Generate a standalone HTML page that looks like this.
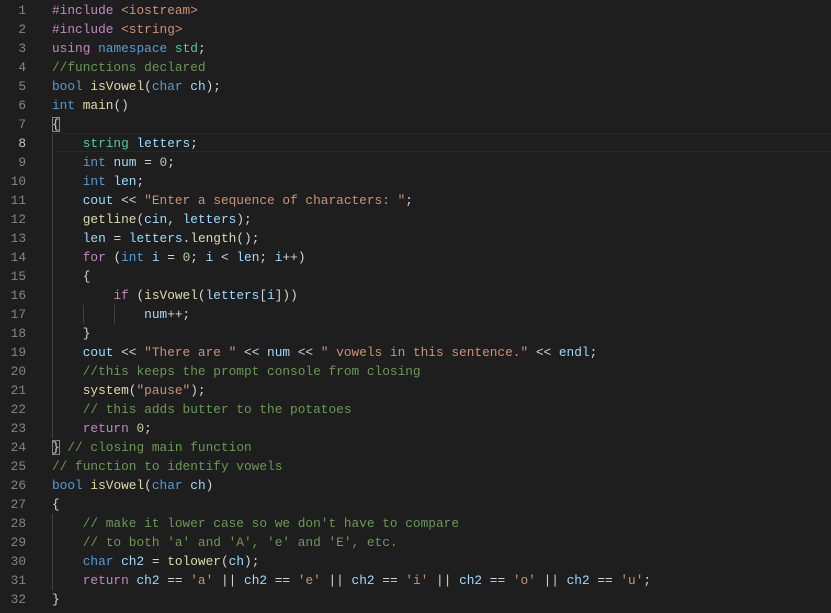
<!DOCTYPE html>
<html><head><meta charset="utf-8"><style>
body{margin:0;width:831px;height:613px;background:#1e1e1e;overflow:hidden;font-family:"Liberation Mono",monospace;font-size:12.8px;}
.l{position:absolute;left:0;height:19px;line-height:19px;white-space:pre;width:831px}
.n{position:absolute;right:805px;color:#858585;text-align:right}
.c{position:absolute;left:52px;color:#d4d4d4}
.k{color:#569cd6}.p{color:#c586c0}.s{color:#ce9178}.m{color:#6a9955}.f{color:#dcdcaa}.v{color:#9cdcfe}.t{color:#4ec9b0}.u{color:#b5cea8}
.g{position:absolute;width:1px;background:#404040}
.b{outline:1px solid #888;outline-offset:-1px}
.cur{position:absolute;left:52px;right:0;top:133px;height:17px;border-top:1px solid #282828;border-bottom:1px solid #282828}
</style></head><body>
<div class="cur"></div>
<div class="g" style="left:52px;top:134px;height:304px"></div>
<div class="g" style="left:83px;top:305px;height:19px"></div>
<div class="g" style="left:114px;top:305px;height:19px"></div>
<div class="g" style="left:52px;top:514px;height:76px"></div>
<div class="l" style="top:1px"><span class="n">1</span><span class="c"><span class="p">#include</span> <span class="s">&lt;iostream&gt;</span></span></div>
<div class="l" style="top:20px"><span class="n">2</span><span class="c"><span class="p">#include</span> <span class="s">&lt;string&gt;</span></span></div>
<div class="l" style="top:39px"><span class="n">3</span><span class="c"><span class="p">using</span> <span class="k">namespace</span> <span class="t">std</span>;</span></div>
<div class="l" style="top:58px"><span class="n">4</span><span class="c"><span class="m">//functions declared</span></span></div>
<div class="l" style="top:77px"><span class="n">5</span><span class="c"><span class="k">bool</span> <span class="f">isVowel</span>(<span class="k">char</span> <span class="v">ch</span>);</span></div>
<div class="l" style="top:96px"><span class="n">6</span><span class="c"><span class="k">int</span> <span class="f">main</span>()</span></div>
<div class="l" style="top:115px"><span class="n">7</span><span class="c"><span class="b">{</span></span></div>
<div class="l" style="top:134px"><span class="n" style="color:#c6c6c6">8</span><span class="c">    <span class="t">string</span> <span class="v">letters</span>;</span></div>
<div class="l" style="top:153px"><span class="n">9</span><span class="c">    <span class="k">int</span> <span class="v">num</span> = <span class="u">0</span>;</span></div>
<div class="l" style="top:172px"><span class="n">10</span><span class="c">    <span class="k">int</span> <span class="v">len</span>;</span></div>
<div class="l" style="top:191px"><span class="n">11</span><span class="c">    <span class="v">cout</span> &lt;&lt; <span class="s">"Enter a sequence of characters: "</span>;</span></div>
<div class="l" style="top:210px"><span class="n">12</span><span class="c">    <span class="f">getline</span>(<span class="v">cin</span>, <span class="v">letters</span>);</span></div>
<div class="l" style="top:229px"><span class="n">13</span><span class="c">    <span class="v">len</span> = <span class="v">letters</span>.<span class="f">length</span>();</span></div>
<div class="l" style="top:248px"><span class="n">14</span><span class="c">    <span class="p">for</span> (<span class="k">int</span> <span class="v">i</span> = <span class="u">0</span>; <span class="v">i</span> &lt; <span class="v">len</span>; <span class="v">i</span>++)</span></div>
<div class="l" style="top:267px"><span class="n">15</span><span class="c">    {</span></div>
<div class="l" style="top:286px"><span class="n">16</span><span class="c">        <span class="p">if</span> (<span class="f">isVowel</span>(<span class="v">letters</span>[<span class="v">i</span>]))</span></div>
<div class="l" style="top:305px"><span class="n">17</span><span class="c">            <span class="v">num</span>++;</span></div>
<div class="l" style="top:324px"><span class="n">18</span><span class="c">    }</span></div>
<div class="l" style="top:343px"><span class="n">19</span><span class="c">    <span class="v">cout</span> &lt;&lt; <span class="s">"There are "</span> &lt;&lt; <span class="v">num</span> &lt;&lt; <span class="s">" vowels in this sentence."</span> &lt;&lt; <span class="v">endl</span>;</span></div>
<div class="l" style="top:362px"><span class="n">20</span><span class="c">    <span class="m">//this keeps the prompt console from closing</span></span></div>
<div class="l" style="top:381px"><span class="n">21</span><span class="c">    <span class="f">system</span>(<span class="s">"pause"</span>);</span></div>
<div class="l" style="top:400px"><span class="n">22</span><span class="c">    <span class="m">// this adds butter to the potatoes</span></span></div>
<div class="l" style="top:419px"><span class="n">23</span><span class="c">    <span class="p">return</span> <span class="u">0</span>;</span></div>
<div class="l" style="top:438px"><span class="n">24</span><span class="c"><span class="b">}</span> <span class="m">// closing main function</span></span></div>
<div class="l" style="top:457px"><span class="n">25</span><span class="c"><span class="m">// function to identify vowels</span></span></div>
<div class="l" style="top:476px"><span class="n">26</span><span class="c"><span class="k">bool</span> <span class="f">isVowel</span>(<span class="k">char</span> <span class="v">ch</span>)</span></div>
<div class="l" style="top:495px"><span class="n">27</span><span class="c">{</span></div>
<div class="l" style="top:514px"><span class="n">28</span><span class="c">    <span class="m">// make it lower case so we don't have to compare</span></span></div>
<div class="l" style="top:533px"><span class="n">29</span><span class="c">    <span class="m">// to both 'a' and 'A', 'e' and 'E', etc.</span></span></div>
<div class="l" style="top:552px"><span class="n">30</span><span class="c">    <span class="k">char</span> <span class="v">ch2</span> = <span class="f">tolower</span>(<span class="v">ch</span>);</span></div>
<div class="l" style="top:571px"><span class="n">31</span><span class="c">    <span class="p">return</span> <span class="v">ch2</span> == <span class="s">'a'</span> || <span class="v">ch2</span> == <span class="s">'e'</span> || <span class="v">ch2</span> == <span class="s">'i'</span> || <span class="v">ch2</span> == <span class="s">'o'</span> || <span class="v">ch2</span> == <span class="s">'u'</span>;</span></div>
<div class="l" style="top:590px"><span class="n">32</span><span class="c">}</span></div>
</body></html>
